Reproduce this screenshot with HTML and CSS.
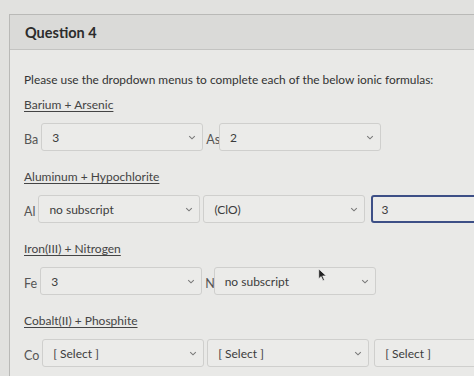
FILE: index.html
```html
<!DOCTYPE html>
<html lang="en">
<head>
  <meta charset="UTF-8" />
  <title>Question 4</title>
  <link rel="stylesheet" href="styles.css">
</head>
<body>
  <div class="question">
    <div class="question-header">Question 4</div>

    <div class="question-body">
      <p class="prompt">Please use the dropdown menus to complete each of the below ionic formulas:</p>

      <div class="pair-title">Barium + Arsenic</div>
      <div class="formula-row">
        <span class="symbol">Ba</span>
        <div class="select"><span>3</span><svg viewBox="0 0 10 6"><path d="M1.5 1.2 5 4.6 8.5 1.2" /></svg></div>
        <span class="symbol tight">As</span>
        <div class="select"><span>2</span><svg viewBox="0 0 10 6"><path d="M1.5 1.2 5 4.6 8.5 1.2" /></svg></div>
      </div>

      <div class="pair-title">Aluminum + Hypochlorite</div>
      <div class="formula-row">
        <span class="symbol">Al</span>
        <div class="select"><span>no subscript</span><svg viewBox="0 0 10 6"><path d="M1.5 1.2 5 4.6 8.5 1.2" /></svg></div>
        <div class="select"><span>(ClO)</span><svg viewBox="0 0 10 6"><path d="M1.5 1.2 5 4.6 8.5 1.2" /></svg></div>
        <div class="select focused"><span>3</span></div>
      </div>

      <div class="pair-title">Iron(III) + Nitrogen</div>
      <div class="formula-row">
        <span class="symbol">Fe</span>
        <div class="select"><span>3</span><svg viewBox="0 0 10 6"><path d="M1.5 1.2 5 4.6 8.5 1.2" /></svg></div>
        <span class="symbol tight">N</span>
        <div class="select"><span>no subscript</span><svg viewBox="0 0 10 6"><path d="M1.5 1.2 5 4.6 8.5 1.2" /></svg></div>
        <svg class="pointer" viewBox="0 0 12 18"><path d="M1 1v13l3.2-3 2.4 5.5 2-0.9-2.4-5.4H11z" /></svg>
      </div>

      <div class="pair-title">Cobalt(II) + Phosphite</div>
      <div class="formula-row">
        <span class="symbol">Co</span>
        <div class="select"><span>[ Select ]</span><svg viewBox="0 0 10 6"><path d="M1.5 1.2 5 4.6 8.5 1.2" /></svg></div>
        <div class="select"><span>[ Select ]</span><svg viewBox="0 0 10 6"><path d="M1.5 1.2 5 4.6 8.5 1.2" /></svg></div>
        <div class="select wide"><span>[ Select ]</span></div>
      </div>
    </div>
  </div>
</body>
</html>
```

FILE: styles.css
```css
body {
  font-family: Lato, 'Liberation Sans', sans-serif;
  margin: 0;
  padding: 14px 0 0 9px;
  background: #e1e1df;
  color: #333;
  overflow: hidden;
  height: 376px;
  box-sizing: border-box;
}

.question {
  width: 500px;
  border: 1px solid #b9b9b7;
  border-right: none;
  background: #e9e9e7;
  height: 400px;
}

.question-header {
  height: 34px;
  padding-left: 15px;
  display: flex;
  align-items: center;
  font-size: 14.5px;
  font-weight: bold;
  color: #2c2c2c;
  background: #dadad8;
  border-bottom: 1px solid #c3c3c1;
}

.question-body {
  padding: 21px 0 0 14px;
}

.prompt {
  margin: 0 0 7px;
  font-size: 11.9px;
  line-height: 18px;
}

.pair-title {
  font-size: 12px;
  line-height: 18px;
  text-decoration: underline;
  text-underline-offset: 2px;
  color: #444;
  margin-bottom: 9px;
  width: max-content;
}

.formula-row {
  display: flex;
  align-items: center;
  gap: 3px;
  margin-bottom: 17px;
  position: relative;
}

.symbol {
  font-size: 12.5px;
  color: #555;
  margin-top: 4px;
}

.symbol.tight {
  margin-right: -4px;
}

.select {
  width: 162px;
  height: 28px;
  box-sizing: border-box;
  border: 1px solid #cfcfcd;
  border-radius: 3px;
  background: #ebebe9;
  display: flex;
  align-items: center;
  justify-content: space-between;
  padding: 0 6px 0 10px;
  font-size: 12px;
  color: #3c3c3c;
}

.select svg {
  width: 8px;
  height: 5px;
  fill: none;
  stroke: #777;
  stroke-width: 1.3;
}

.select.focused {
  width: 120px;
  border: 2px solid #3d4f86;
  margin-left: 3px;
  padding-left: 8px;
}

.select.wide {
  width: 120px;
  margin-left: 2px;
}

.pointer {
  position: absolute;
  left: 294px;
  top: 1px;
  width: 9px;
  height: 14px;
  fill: #222;
  stroke: #fff;
  stroke-width: 0.8;
}
```
